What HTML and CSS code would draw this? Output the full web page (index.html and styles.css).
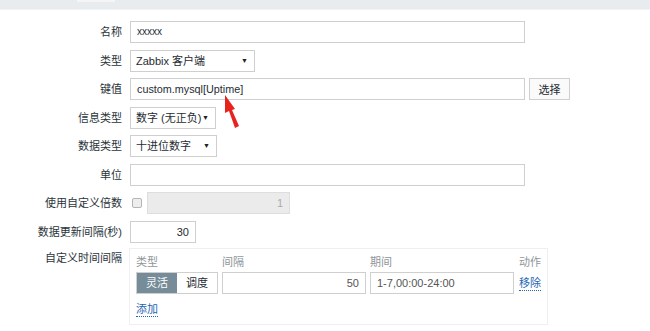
FILE: index.html
```html
<!DOCTYPE html>
<html>
	<head>
		<meta charset="utf-8">
		<link rel="stylesheet" href="styles.css">
	</head>
	<body>
		<div class="topbar"><div class="tab"></div></div>

		<div class="form">
			<label>名称</label>
			<div class="field"><div class="input wide small">xxxxx</div></div>

			<label>类型</label>
			<div class="field"><div class="select w-type">Zabbix 客户端<span class="caret">▼</span></div></div>

			<label>键值</label>
			<div class="field">
				<div class="input wide key">custom.mysql[Uptime]</div>
				<button class="btn">选择</button>
			</div>

			<label>信息类型</label>
			<div class="field"><div class="select w-info">数字 (无正负)<span class="caret">▼</span></div></div>

			<label>数据类型</label>
			<div class="field"><div class="select w-data">十进位数字<span class="caret">▼</span></div></div>

			<label>单位</label>
			<div class="field"><div class="input wide"></div></div>

			<label>使用自定义倍数</label>
			<div class="field">
				<span class="checkbox"></span>
				<div class="input readonly num">1</div>
			</div>

			<label>数据更新间隔(秒)</label>
			<div class="field"><div class="input delay num">30</div></div>

			<label class="top">自定义时间间隔</label>
			<div class="field last">
				<div class="intervals">
					<div class="ihead">
						<span class="c-type">类型</span>
						<span class="c-int">间隔</span>
						<span class="c-per">期间</span>
						<span class="c-act">动作</span>
					</div>
					<div class="irow">
						<div class="seg">
							<span class="on">灵活</span>
							<span>调度</span>
						</div>
						<div class="input c-int num">50</div>
						<div class="input c-per">1-7,00:00-24:00</div>
						<a class="link c-act">移除</a>
					</div>
					<a class="link add">添加</a>
				</div>
			</div>
		</div>

		<svg class="arrow" width="30" height="40" viewBox="0 0 30 40">
			<polygon points="3,1 13,15 10,16 17,32 13,34 7,17 3,19" fill="#e8231e"/>
		</svg>
	</body>
</html>
```

FILE: styles.css
```css
body {
	margin: 0;
	background: #fff;
	font-family: Arial, "Liberation Sans", "Noto Sans CJK SC", sans-serif;
	font-size: 11px;
	color: #1f2c33;
}

.topbar {
	height: 9px;
	background: #e9ecef;
	position: relative;
	border-bottom: 1px solid #f3f4f5;
}

.tab {
	position: absolute;
	left: 77px;
	top: 0;
	width: 38px;
	height: 2px;
	background: #f4f5f6;
}

.form {
	display: grid;
	grid-template-columns: 122px 1fr;
	column-gap: 8px;
	row-gap: 6.5px;
	margin-top: 11px;
	grid-auto-rows: minmax(22px, auto);
	padding-bottom: 10px;
}

.form label {
	text-align: right;
	line-height: 22px;
	color: #2a3439;
	white-space: nowrap;
}

.form label.top {
	line-height: 18px;
}

.field {
	display: flex;
	align-items: center;
	gap: 4px;
}

.field.last {
	align-items: flex-start;
}

.input {
	box-sizing: border-box;
	height: 22px;
	line-height: 20px;
	border: 1px solid #cfcfcf;
	background: #fff;
	padding: 0 6px;
	white-space: nowrap;
}

.wide {
	width: 395px;
}

.small {
	font-size: 10px;
}

.key {
	font-size: 10.8px;
}

.num {
	text-align: right;
}

.readonly {
	width: 143px;
	background: #ebebeb;
	color: #aaa;
	border-color: #dedede;
}

.delay {
	width: 66px;
}

.checkbox {
	width: 8px;
	height: 8px;
	border: 1px solid #b5b5b5;
	background: #eee;
	border-radius: 2px;
	margin: 0 1px 0 2px;
}

.select {
	box-sizing: border-box;
	height: 22px;
	line-height: 20px;
	border: 1px solid #cfcfcf;
	padding: 0 6px 0 5px;
	display: flex;
	justify-content: space-between;
	white-space: nowrap;
}

.caret {
	font-size: 7px;
	color: #222;
}

.w-type { width: 125px; }
.w-info { width: 86px; }
.w-data { width: 87px; }

.btn {
	box-sizing: border-box;
	height: 22px;
	width: 41px;
	border: 1px solid #cfcfcf;
	background: #fafafa;
	font: inherit;
	color: #1f2c33;
	padding: 0;
	margin-top: -1px;
}

.intervals {
	box-sizing: border-box;
	width: 419px;
	height: 77px;
	border: 1px solid #efefef;
	margin-left: -1px;
	margin-top: -1px;
	padding: 4px 6px 0;
}

.ihead, .irow {
	display: flex;
	align-items: center;
	gap: 4px;
}

.ihead {
	height: 16px;
	color: #8f969a;
	margin-bottom: 3px;
}

.c-type { width: 82px; }
.c-int { width: 144px; }
.c-per { width: 144px; }
.c-act { margin-left: auto; white-space: nowrap; }

.seg {
	display: flex;
	width: 82px;
	height: 22px;
	box-sizing: border-box;
	border: 1px solid #cfcfcf;
}

.seg span {
	flex: 1;
	text-align: center;
	line-height: 20px;
}

.seg .on {
	background: #768d99;
	color: #fff;
}

.irow .input {
	color: #555;
}

.link {
	color: #1f65b4;
	border-bottom: 1px dotted #1f65b4;
	line-height: 14px;
}

.add {
	display: inline-block;
	margin-top: 8px;
}

.arrow {
	position: absolute;
	left: 222px;
	top: 94px;
}
```
